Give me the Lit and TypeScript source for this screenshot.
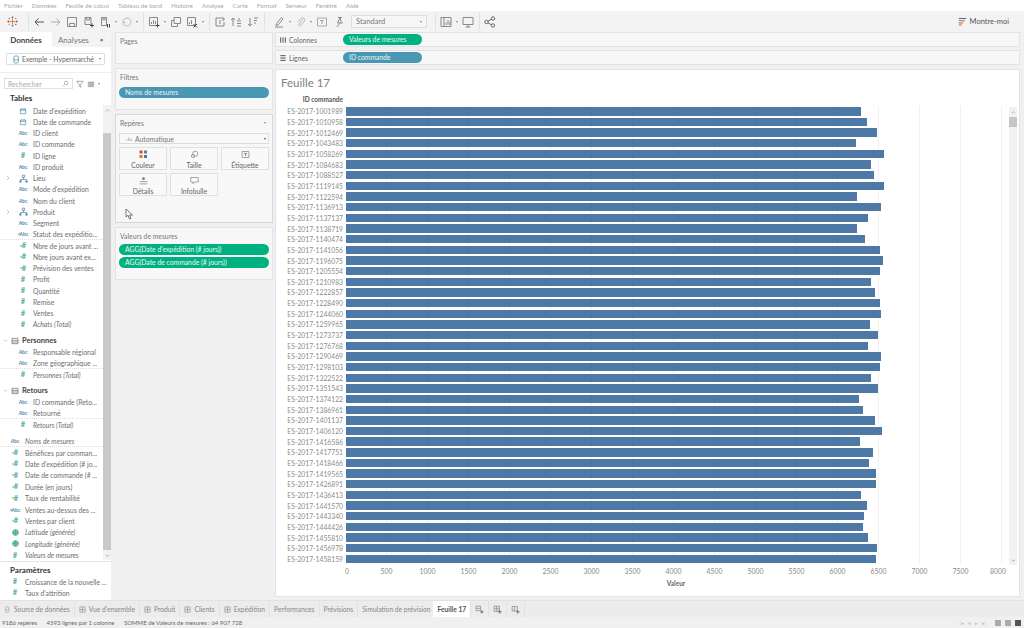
import { LitElement, html, css, svg } from 'lit';
import { customElement } from 'lit/decorators.js';

type FieldType = 'abc' | 'num' | 'date' | 'hier' | 'calcnum' | 'calcabc' | 'globe';

interface Field {
  t: FieldType;
  n: string;
  i?: boolean;
  sep?: boolean;
}

const TABLES: Field[] = [
  { t: 'date', n: "Date d'expédition" },
  { t: 'date', n: 'Date de commande' },
  { t: 'abc', n: 'ID client' },
  { t: 'abc', n: 'ID commande' },
  { t: 'num', n: 'ID ligne' },
  { t: 'abc', n: 'ID produit' },
  { t: 'hier', n: 'Lieu' },
  { t: 'abc', n: "Mode d'expédition" },
  { t: 'abc', n: 'Nom du client' },
  { t: 'hier', n: 'Produit' },
  { t: 'abc', n: 'Segment' },
  { t: 'calcabc', n: 'Statut des expéditio...', sep: true },
  { t: 'calcnum', n: 'Nbre de jours avant ...' },
  { t: 'calcnum', n: 'Nbre jours avant ex...' },
  { t: 'calcnum', n: 'Prévision des ventes' },
  { t: 'num', n: 'Profit' },
  { t: 'num', n: 'Quantité' },
  { t: 'num', n: 'Remise' },
  { t: 'num', n: 'Ventes' },
  { t: 'num', n: 'Achats (Total)', i: true },
];

const PERSONNES: Field[] = [
  { t: 'abc', n: 'Responsable régional' },
  { t: 'abc', n: 'Zone géographique ...', sep: true },
  { t: 'num', n: 'Personnes (Total)', i: true },
];

const RETOURS: Field[] = [
  { t: 'abc', n: 'ID commande (Reto...' },
  { t: 'abc', n: 'Retourné', sep: true },
  { t: 'num', n: 'Retours (Total)', i: true },
];

const LOOSE: Field[] = [
  { t: 'abc', n: 'Noms de mesures', i: true, sep: true },
  { t: 'calcnum', n: 'Bénéfices par comman...' },
  { t: 'calcnum', n: "Date d'expédition (# jo..." },
  { t: 'calcnum', n: 'Date de commande (# ...' },
  { t: 'calcnum', n: 'Durée (en jours)' },
  { t: 'calcnum', n: 'Taux de rentabilité' },
  { t: 'calcabc', n: 'Ventes au-dessus des ...' },
  { t: 'calcnum', n: 'Ventes par client' },
  { t: 'globe', n: 'Latitude (générée)', i: true },
  { t: 'globe', n: 'Longitude (générée)', i: true },
  { t: 'num', n: 'Valeurs de mesures', i: true },
];

const PARAMS: Field[] = [
  { t: 'num', n: 'Croissance de la nouvelle ...' },
  { t: 'num', n: "Taux d'attrition" },
];

const ORDERS: [string, number][] = [
  ['1001989', 6290], ['1010958', 6360], ['1012469', 6480], ['1043483', 6225], ['1058269', 6565],
  ['1084683', 6410], ['1088527', 6445], ['1119145', 6565], ['1122594', 6240], ['1136913', 6530],
  ['1137137', 6375], ['1138719', 6240], ['1140474', 6335], ['1141056', 6520], ['1196075', 6555],
  ['1205554', 6520], ['1210983', 6410], ['1222857', 6460], ['1228490', 6520], ['1244060', 6530],
  ['1259965', 6395], ['1273737', 6495], ['1276768', 6375], ['1290469', 6530], ['1298103', 6520],
  ['1322522', 6410], ['1351543', 6495], ['1374122', 6265], ['1386961', 6310], ['1401137', 6460],
  ['1406120', 6545], ['1416586', 6275], ['1417751', 6430], ['1418466', 6385], ['1419565', 6470],
  ['1426891', 6470], ['1436413', 6290], ['1441570', 6360], ['1443340', 6325], ['1444426', 6310],
  ['1455810', 6375], ['1456978', 6480], ['1458159', 6470],
];

const TICKS = [0, 500, 1000, 1500, 2000, 2500, 3000, 3500, 4000, 4500, 5000, 5500, 6000, 6500, 7000, 7500, 8000];

const MENU = [
  'Fichier', 'Données', 'Feuille de calcul', 'Tableau de bord', 'Histoire', 'Analyse',
  'Carte', 'Format', 'Serveur', 'Fenêtre', 'Aide',
];

const PX_PER_UNIT = 41 / 500;

// petit wrapper svg 12x12, les icônes sont dessinées au trait
const ico = (body: unknown, size = 12, color = '#888') => html`<svg
  width=${size} height=${size} viewBox="0 0 12 12" fill="none" stroke=${color} stroke-width="1">${body}</svg>`;

const back = svg`<path d="M11 6H2M5.5 2.5 2 6l3.5 3.5"/>`;
const sheetAdd = svg`<path d="M2 1.5h6v7H2zM3.5 1.5v2.5h3V1.5"/><path d="M9 7.5v4M7 9.5h4" stroke="#444"/>`;
const sheetPause = svg`<path d="M2.5 1.5h5v8h-5zM4 1.5v2.5h2V1.5"/><path d="M8.5 8v3.5M10.5 8v3.5" stroke="#444"/>`;
const refresh = svg`<path d="M2 6a4 4 0 1 1 1.2 2.9M2 9V6.5h2.5"/>`;
const chartAdd = svg`<path d="M1.5 1.5h8v8h-8zM3.5 8V6M5.5 8V4M7.5 8V5"/><path d="M9.5 7.5v4M7.5 9.5h4" stroke="#444"/>`;
const chartCopy = svg`<path d="M4 1.5h6.5v6H4zM1.5 4.5H4M1.5 4.5v6h6V7.5"/>`;
const chartDel = svg`<path d="M1.5 1.5h8v8h-8zM3.5 8V6M5.5 8V4"/><path d="m7.5 8 3.5 3.5M11 8l-3.5 3.5" stroke="#444"/>`;
const swap = svg`<path d="M2 2h8v2H8M2 2v8h2M4 10h6V6M6 4v4"/>`;
const sortUp = svg`<path d="M3 10V2M1 4l2-2 2 2M7 5h4M7 7.5h4M7 10h4M8 3h2"/>`;
const sortDown = svg`<path d="M3 2v8M1 8l2 2 2-2M7 2h4M7 4.5h3M7 7h2"/>`;
const pen = svg`<path d="m8.5 1.5 1.5 1.5-5 6-2 .5.5-2zM2 11h8"/>`;
const clip = svg`<path d="M8 3 4 8a1.3 1.3 0 0 0 2 1.6l3.3-4.4a2.2 2.2 0 0 0-3.5-2.7L3 6"/>`;
const tbox = svg`<path d="M1.5 2h9v8h-9z"/><path d="M4 4.5h4M6 4.5V8" stroke-width="1.2"/>`;
const pin = svg`<path d="M5 1.5h4M7 1.5 8 5.5 9.5 7h-5L5.5 5zM6.5 7.5 4 11"/>`;
const present = svg`<path d="M1 1.5h10v7H1zM6 8.5V11M3.5 11h5"/>`;
const share = svg`<circle cx="2.5" cy="6" r="1.7"/><circle cx="9" cy="2.5" r="1.7"/><circle cx="9" cy="9.5" r="1.7"/><path d="m4 5.2 3.5-2M4 6.8l3.5 2"/>`;
const viewCards = svg`<path d="M1 1.5h10v9H1zM4 1.5v9"/><path d="M6 9V6.5M8 9V4M10 9V5.5"/>`;
const cylinder = svg`<path d="M2.5 2.5a3 1.3 0 0 1 6 0v7a3 1.3 0 0 1-6 0zM2.5 5.5a3 1.3 0 0 0 6 0"/>`;
const sheetTab = svg`<path d="M1.5 1.5h9v9h-9zM6 1.5v9M1.5 6h9"/>`;
const newSheet = svg`<path d="M1.5 1.5h6v6h-6zM1.5 4.5h6"/><path d="M9 7v4.5M7 9.2h4.5" stroke="#555"/>`;
const newDash = svg`<path d="M1.5 1.5h7v7h-7zM5 1.5v7M1.5 5h7"/><path d="M9 7v4.5M7 9.2h4.5" stroke="#555"/>`;
const newStory = svg`<path d="M1.5 2h7v6h-7zM4.5 2v6"/><path d="M9 7v4.5M7 9.2h4.5" stroke="#555"/>`;

@customElement('app-root')
export class AppRoot extends LitElement {
  static styles = css`
    :host {
      display: flex;
      flex-direction: column;
      width: 1024px;
      height: 628px;
      overflow: hidden;
      background: #f0f0f0;
      font-family: Lato, 'Open Sans', sans-serif;
      font-size: 6.8px;
      color: #6e6e6e;
      position: relative;
    }
    svg { display: block; flex: none; }

    /* barre de menu */
    .menu { display: flex; gap: 9px; height: 11px; padding-left: 4px; background: #fff; color: #a8a8a8; align-items: center; font-size: 6.3px; }

    /* barre d'outils */
    .toolbar { display: flex; align-items: center; height: 21px; background: #f3f3f3; padding-left: 7px; }
    .tool { margin-right: 4.5px; }
    .caret { width: 0; height: 0; border: 1.5px solid transparent; border-top: 2px solid #888; border-bottom: 0; margin-right: 4px; margin-left: -1px; flex: none; }
    .caret.flush { margin: 0; }
    .tsep { width: 1px; height: 18px; background: #e2e2e2; margin: 0 4px 0 1px; flex: none; }
    .tsep.wide { margin-right: 8px; }
    .tsep.after-select { margin-left: 8px; }
    .logo { margin-right: 9px; }
    .select { display: flex; align-items: center; justify-content: space-between; box-sizing: border-box; width: 76px; height: 13px; margin-left: 2px; border: 1px solid #ddd; background: #f6f6f6; padding: 0 4px; color: #777; font-size: 7.5px; flex: none; }
    .showme { margin-left: auto; display: flex; align-items: center; gap: 3px; padding-right: 15px; color: #555; font-size: 7.5px; }

    .main { display: flex; flex: 1; min-height: 0; }

    /* panneau de gauche */
    .left { width: 111px; background: #fff; display: flex; flex-direction: column; flex: none; position: relative; }
    .ltabs { display: flex; height: 15px; align-items: center; flex: none; }
    .ltab { height: 100%; display: flex; align-items: center; justify-content: center; font-size: 8px; }
    .ltab.on { width: 52px; font-weight: 700; color: #444; }
    .ltab.off { flex: 1; background: #f3f3f3; color: #777; gap: 11px; padding-right: 2px; }
    .dsrow { height: 26px; padding: 6px 6px 0; background: #fff; border-bottom: 1px solid #eee; box-sizing: border-box; flex: none; }
    .ds { display: flex; align-items: center; box-sizing: border-box; height: 12px; border: 1px solid #ddd; border-radius: 1px; padding-left: 5px; gap: 1px; color: #666; }
    .ds .caret { margin-left: auto; margin-right: 3px; }
    .search { display: flex; align-items: center; padding: 5px 0 0 4px; gap: 3px; flex: none; }
    .sbox { display: flex; align-items: center; justify-content: space-between; box-sizing: border-box; width: 69px; height: 11px; border: 1px solid #e0e0e0; padding: 0 3px; color: #aaa; }
    .scroll { flex: 1; display: flex; min-height: 0; overflow: hidden; }
    .list { flex: 1; min-width: 0; padding-top: 3px; }
    .sb { width: 8px; margin-top: 16px; height: 455px; background: #f2f2f2; display: flex; flex-direction: column; flex: none; }
    .sb .end { height: 10px; display: flex; align-items: center; justify-content: center; }
    .sb .thumb { background: #c9c9c9; flex: 1; margin-top: 18px; }
    .tables { font-weight: 700; font-size: 8px; color: #333; padding-left: 10px; height: 12px; line-height: 12px; }
    .list .tables { height: 13px; }
    .group { display: flex; align-items: center; height: 12px; margin-top: 4.5px; padding-left: 3px; font-weight: 700; color: #444; font-size: 7.5px; }
    .group .chev { width: 8px; flex: none; }
    .group .tbl { margin-right: 3px; }
    .row { display: flex; align-items: center; height: 11.25px; white-space: nowrap; }
    .row.sep { border-bottom: 1px dotted #ddd; box-sizing: border-box; }
    .row .exp { width: 13px; flex: none; display: flex; justify-content: flex-end; padding-right: 2px; box-sizing: border-box; }
    .row .ic { width: 20px; flex: none; display: flex; justify-content: center; align-items: center; }
    .row.flat .ic { margin-left: 5px; }
    .row.it .nm { font-style: italic; }
    .abc { font-size: 5px; color: #4c87a8; font-weight: 700; }
    .num { font-size: 7.5px; color: #4fb096; font-weight: 700; }
    .calc { font-size: 5px; color: #4fb096; margin-right: -1px; }
    .calc.blue { color: #4c87a8; }
    .loose { margin-top: 5px; }
    .loose .row { height: 11.4px; }
    .params-box { border-top: 1px solid #e6e6e6; padding-top: 2px; background: #fff; height: 36px; flex: none; }

    /* cartes du milieu */
    .mid { width: 164px; display: flex; flex-direction: column; gap: 4px; flex: none; padding-left: 4px; box-sizing: border-box; position: relative; }
    .card { border: 1px solid #e3e3e3; background: #f7f7f7; box-sizing: border-box; padding: 3px 3px 0 3px; width: 158px; }
    .card h4 { margin: 0 0 0 1px; font-weight: 400; font-size: 6.8px; color: #777; height: 11px; line-height: 11px; }
    .pages { height: 32px; }
    .filters { height: 42px; }
    .filters h4 { margin-bottom: 4px; }
    .marks { height: 109px; border-color: #d8d8d8; padding-top: 2px; }
    .marks header { display: flex; justify-content: space-between; align-items: center; padding-right: 3px; height: 11px; color: #777; margin-left: 1px; }
    .marksel { display: flex; align-items: center; box-sizing: border-box; height: 11px; margin: 5px 0 3px 0; border: 1px solid #ddd; background: #f9f9f9; padding-left: 6px; gap: 3px; color: #777; }
    .marksel .caret { margin-left: auto; margin-right: 2px; border-top-color: #555; }
    .mgrid { display: grid; grid-template-columns: repeat(3, 48px); grid-auto-rows: 23px; gap: 3px; }
    .mbtn { border: 1px solid #e0e0e0; background: #f9f9f9; display: flex; flex-direction: column; align-items: center; justify-content: center; gap: 2px; color: #666; padding-top: 2px; box-sizing: border-box; }
    .measures { height: 53px; }
    .measures h4 { margin-bottom: 2px; }
    .pill { height: 11px; line-height: 11px; border-radius: 6px; color: #e9f5f2; padding-left: 6px; font-size: 6.8px; white-space: nowrap; }
    .pill.blue { background: #4a97b4; }
    .pill.green { background: #00b180; }
    .pill + .pill { margin-top: 1.5px; }
    .cursor { position: absolute; left: 14px; top: 176px; }

    /* partie droite */
    .right { flex: 1; display: flex; flex-direction: column; gap: 3px; min-width: 0; padding-right: 4px; }
    .shelf { display: flex; align-items: center; height: 15px; border: 1px solid #e3e3e3; background: #f7f7f7; box-sizing: border-box; color: #666; }
    .shelf .lbl { display: flex; align-items: center; gap: 2px; width: 67px; padding-left: 3px; box-sizing: border-box; flex: none; }
    .shelf .pill { width: 79px; box-sizing: border-box; }
    .view { flex: 1; margin-top: 1px; margin-bottom: 3px; background: #fff; border: 1px solid #e3e3e3; box-sizing: border-box; display: flex; flex-direction: column; min-height: 0; position: relative; }
    .title { font-size: 11.5px; color: #808080; height: 24px; line-height: 26px; padding-left: 5px; flex: none; font-weight: 400; }
    .hdr { height: 12px; line-height: 12px; width: 67px; text-align: right; font-weight: 700; font-size: 6.5px; color: #555; flex: none; }
    .plot { display: flex; flex-direction: column; flex: none; width: 733px; background: repeating-linear-gradient(to right, transparent 0 40px, #f1f1f1 40px 41px) 69.5px 0 / calc(100% - 70px) 100% no-repeat; }
    .brow { display: flex; align-items: center; height: 10.667px; }
    .blab { width: 67px; flex: none; text-align: right; color: #8c8c8c; font-size: 6.75px; white-space: nowrap; }
    .bar { height: 8.4px; margin-left: 2.5px; background: #4e79a7; }
    .axis { display: flex; margin-top: 3px; padding-left: 49px; height: 10px; flex: none; color: #888; font-size: 6.8px; }
    .tick { width: 41px; flex: none; text-align: center; }
    .tick.first { padding-left: 3px; box-sizing: border-box; }
    .tick.last { padding-right: 7px; box-sizing: border-box; }
    .axtitle { text-align: center; font-weight: 700; font-size: 6.5px; color: #666; width: 800px; margin-top: 3px; }
    .vsb { position: absolute; right: 2px; top: 37px; bottom: 31px; width: 8px; background: #f2f2f2; display: flex; flex-direction: column; }
    .vsb .end { height: 10px; display: flex; align-items: center; justify-content: center; }
    .vsb .thumb { height: 10px; background: #c6c6c6; }
    .vsb .fill { flex: 1; }

    /* onglets */
    .tabs { display: flex; height: 16px; background: #ececec; border-top: 1px solid #e2e2e2; flex: none; color: #888; align-items: stretch; }
    .tab { display: flex; align-items: center; gap: 3px; padding: 0 4px; border-right: 1px solid #e2e2e2; white-space: nowrap; font-size: 6.7px; }
    .tab.on { background: #fff; color: #555; font-weight: 700; margin-left: -2px; }
    .status { display: flex; align-items: center; height: 11px; background: #f0f0f0; color: #666; padding-left: 2px; flex: none; font-size: 6px; }
    .status .gap { width: 9.5px; }
    .status .nav { margin-left: auto; display: flex; align-items: center; gap: 4px; padding-right: 3px; color: #bbb; font-size: 5px; }
    .vicon { width: 6px; height: 6px; background: #aaa; }
    .vicon.first { margin-left: 5px; }
    .vicon.dark { background: #555; }
  `;

  private fieldIcon(t: FieldType) {
    switch (t) {
      case 'abc':
        return html`<span class="abc">Abc</span>`;
      case 'num':
        return html`<span class="num">#</span>`;
      case 'calcnum':
        return html`<span class="calc">=</span><span class="num">#</span>`;
      case 'calcabc':
        return html`<span class="calc blue">=</span><span class="abc">Abc</span>`;
      case 'date':
        return ico(svg`<path d="M2 3h8v7H2zM2 5h8M4 2v1.5M8 2v1.5"/>`, 8, '#4c87a8');
      case 'hier':
        return ico(svg`<path d="M4.5 1.5h3v3h-3zM6 4.5V7M2 10.5V7.5h8v3M1 9h2v2H1zM9 9h2v2H9z"/>`, 9, '#4c87a8');
      case 'globe':
        return ico(svg`<circle cx="6" cy="6" r="5" fill="#79c4ab"/><path d="M1 6h10M6 1v10"/>`, 7, '#3ea88a');
    }
  }

  private row(f: Field, flat = false) {
    const cls = `row ${f.i ? 'it' : ''} ${f.sep ? 'sep' : ''} ${flat ? 'flat' : ''}`;
    return html`<div class=${cls}>
      ${flat ? '' : html`<span class="exp">${f.t === 'hier' ? ico(svg`<path d="m4 2 4 4-4 4"/>`, 6, '#888') : ''}</span>`}
      <span class="ic">${this.fieldIcon(f.t)}</span>
      <span class="nm">${f.n}</span>
    </div>`;
  }

  private group(name: string) {
    return html`<div class="group">
      <span class="chev">${ico(svg`<path d="m2 4 4 4 4-4"/>`, 5, '#888')}</span>
      <span class="tbl">${ico(svg`<path d="M1.5 2h9v8h-9zM1.5 5h9M1.5 7.5h9"/>`, 8, '#666')}</span>
      ${name}
    </div>`;
  }

  private toolbar() {
    const t = (b: unknown, c = '#888', s = 12) => html`<span class="tool">${ico(b, s, c)}</span>`;
    const caret = html`<span class="caret"></span>`;
    return html`<div class="toolbar">
      <span class="logo">${ico(
        svg`<path d="M6 3v6M3 6h6" stroke="#e8762c"/><path d="M6 .5v2M5 1.5h2M6 9.5v2M5 10.5h2" stroke="#5b6e9c"/><path d="M.5 6h2M1.5 5v2M9.5 6h2M10.5 5v2" stroke="#c72035"/><path d="M2.5 2v1.5M1.8 2.7h1.5M9.5 8.5V10M8.8 9.2h1.5" stroke="#59879b"/><path d="M9.5 2v1.5M8.8 2.7h1.5M2.5 8.5V10M1.8 9.2h1.5" stroke="#eb912b"/>`,
        11,
      )}</span>
      <span class="tsep"></span>
      ${t(back, '#555')}${t(svg`<g transform="matrix(-1 0 0 1 12 0)">${back}</g>`, '#aaa')}
      ${t(svg`<path d="M1.5 1.5h9v9h-9zM3.5 10.5v-3h5v3"/>`)}
      ${t(sheetAdd)}${t(sheetPause)}${caret}${t(refresh, '#bbb')}${caret}
      <span class="tsep"></span>
      ${t(chartAdd)}${caret}${t(chartCopy)}${t(chartDel)}${caret}
      <span class="tsep"></span>
      ${t(swap)}${t(sortUp)}${t(sortDown)}
      <span class="tsep wide"></span>
      ${t(pen)}${caret}${t(clip, '#bbb')}${caret}${t(tbox, '#aaa')}${t(pin)}
      <span class="select">Standard<span class="caret flush"></span></span>
      <span class="tsep after-select"></span>
      ${t(viewCards)}${caret}${t(present)}
      <span class="tsep"></span>
      ${t(share, '#666')}
      <span class="showme">
        ${ico(svg`<path d="M1 2h10" stroke="#5b6e9c" stroke-width="1.5"/><path d="M1 5h8" stroke="#888" stroke-width="1.5"/><path d="M1 8h6" stroke="#e8762c" stroke-width="1.5"/><path d="M1 10.5h4" stroke="#e8762c" stroke-width="1.5"/>`, 9)}
        Montre-moi
      </span>
    </div>`;
  }

  private left() {
    return html`<aside class="left">
      <div class="ltabs">
        <div class="ltab on">Données</div>
        <div class="ltab off">Analyses<span>▪</span></div>
      </div>
      <div class="dsrow">
        <div class="ds">${ico(cylinder, 9, '#4c87a8')}Exemple - Hypermarché<span class="caret"></span></div>
      </div>
      <div class="search">
        <div class="sbox">Rechercher${ico(svg`<circle cx="7" cy="5" r="3"/><path d="M5 7.5 2 10.5"/>`, 7)}</div>
        ${ico(svg`<path d="M1 2h10L7 6.5V11L5 9.5v-3z"/>`, 8)}
        ${ico(svg`<path d="M2 3h2v7H2zM5 3h2v7H5zM8 3h2v7H8z"/>`, 8)}<span class="caret flush"></span>
      </div>
      <div class="scroll">
        <div class="list">
          <div class="tables">Tables</div>
          ${TABLES.map((f) => this.row(f))}
          ${this.group('Personnes')}
          ${PERSONNES.map((f) => this.row(f))}
          ${this.group('Retours')}
          ${RETOURS.map((f) => this.row(f))}
          <div class="loose">${LOOSE.map((f) => this.row(f, true))}</div>
        </div>
        <div class="sb">
          <div class="end">${ico(svg`<path d="m2 8 4-4 4 4"/>`, 5, '#555')}</div>
          <div class="thumb"></div>
          <div class="end">${ico(svg`<path d="m2 4 4 4 4-4"/>`, 5, '#555')}</div>
        </div>
      </div>
      <div class="params-box">
        <div class="tables">Paramètres</div>
        ${PARAMS.map((f) => this.row(f, true))}
      </div>
    </aside>`;
  }

  private mid() {
    const btn = (label: string, icon: unknown) => html`<div class="mbtn">${icon}<span>${label}</span></div>`;
    return html`<section class="mid">
      <div class="card pages"><h4>Pages</h4></div>
      <div class="card filters">
        <h4>Filtres</h4>
        <div class="pill blue">Noms de mesures</div>
      </div>
      <div class="card marks">
        <header>Repères<span class="caret flush"></span></header>
        <div class="marksel">
          ${ico(svg`<path d="M2 10V7M5 10V3M8 10V5M11 10V6"/>`, 6, '#888')}
          Automatique<span class="caret"></span>
        </div>
        <div class="mgrid">
          ${btn('Couleur', html`<svg width="9" height="9" viewBox="0 0 9 9">
            <rect x="0.5" y="0.5" width="3" height="3" fill="#c0504d"/><rect x="5" y="0.5" width="3" height="3" fill="#7a7a7a"/>
            <rect x="0.5" y="5" width="3" height="3" fill="#e8762c"/><rect x="5" y="5" width="3" height="3" fill="#4e79a7"/>
          </svg>`)}
          ${btn('Taille', ico(svg`<circle cx="7" cy="5" r="3.5"/><circle cx="4" cy="8" r="2.2"/>`, 9))}
          ${btn('Étiquette', ico(tbox, 9))}
          ${btn('Détails', ico(svg`<circle cx="6" cy="3.5" r="1.5" fill="#777"/><path d="M1 7.5h10M1 10.5h10"/>`, 9))}
          ${btn('Infobulle', ico(svg`<path d="M1 2h10v6H6L4 10.5V8H1z"/>`, 9))}
        </div>
      </div>
      <div class="card measures">
        <h4>Valeurs de mesures</h4>
        <div class="pill green">AGG(Date d'expédition (# jours))</div>
        <div class="pill green">AGG(Date de commande (# jours))</div>
      </div>
      <svg class="cursor" width="9" height="12" viewBox="0 0 9 12" fill="#fff" stroke="#555" stroke-width="0.8"><path d="M1 1v8l2-1.8L4.5 11l1.5-.7-1.500-3.300h3z"/></svg>
    </section>`;
  }

  private chart() {
    return html`<div class="view">
      <div class="title">Feuille 17</div>
      <div class="hdr">ID commande</div>
      <div class="plot">
        ${ORDERS.map(([id, v]) => html`<div class="brow">
          <span class="blab">ES-2017-${id}</span>
          <div class="bar" style="width:${(v * PX_PER_UNIT).toFixed(1)}px"></div>
        </div>`)}
      </div>
      <div class="axis">
        ${TICKS.map((t, i) => html`<span class="tick ${i === 0 ? 'first' : ''} ${i === TICKS.length - 1 ? 'last' : ''}">${t}</span>`)}
      </div>
      <div class="axtitle">Valeur</div>
      <div class="vsb">
        <div class="end">${ico(svg`<path d="m2 8 4-4 4 4"/>`, 5, '#555')}</div>
        <div class="thumb"></div>
        <div class="fill"></div>
        <div class="end">${ico(svg`<path d="m2 4 4 4 4-4"/>`, 5, '#555')}</div>
      </div>
    </div>`;
  }

  private tabs() {
    const named = ["Vue d'ensemble", 'Produit', 'Clients', 'Expédition'];
    return html`<div class="tabs">
      <div class="tab">${ico(cylinder, 7, '#999')}Source de données</div>
      ${named.map((n) => html`<div class="tab">${ico(sheetTab, 7, '#888')}${n}</div>`)}
      <div class="tab">Performances</div>
      <div class="tab">Prévisions</div>
      <div class="tab">Simulation de prévision</div>
      <div class="tab on">Feuille 17</div>
      <div class="tab">${ico(newSheet, 9)}</div>
      <div class="tab">${ico(newDash, 9)}</div>
      <div class="tab">${ico(newStory, 9)}</div>
    </div>`;
  }

  render() {
    return html`
      <div class="menu">${MENU.map((m) => html`<span>${m}</span>`)}</div>
      ${this.toolbar()}
      <div class="main">
        ${this.left()}
        ${this.mid()}
        <div class="right">
          <div class="shelf">
            <span class="lbl">${ico(svg`<path d="M2.5 2v8M6 2v8M9.5 2v8" stroke-width="1.5"/>`, 8, '#555')}Colonnes</span>
            <div class="pill green">Valeurs de mesures</div>
          </div>
          <div class="shelf">
            <span class="lbl">${ico(svg`<path d="M2 2.5h8M2 6h8M2 9.5h8" stroke-width="1.5"/>`, 8, '#555')}Lignes</span>
            <div class="pill blue">ID commande</div>
          </div>
          ${this.chart()}
        </div>
      </div>
      ${this.tabs()}
      <div class="status">
        <span>9186 repères</span><span class="gap"></span>
        <span>4593 lignes par 1 colonne</span><span class="gap"></span>
        <span>SOMME de Valeurs de mesures : 64 907 728</span>
        <span class="nav">
          <span>|◂</span><span>◂</span><span>▸</span><span>▸|</span>
          <span class="vicon first"></span><span class="vicon"></span><span class="vicon dark"></span>
        </span>
      </div>
    `;
  }
}
